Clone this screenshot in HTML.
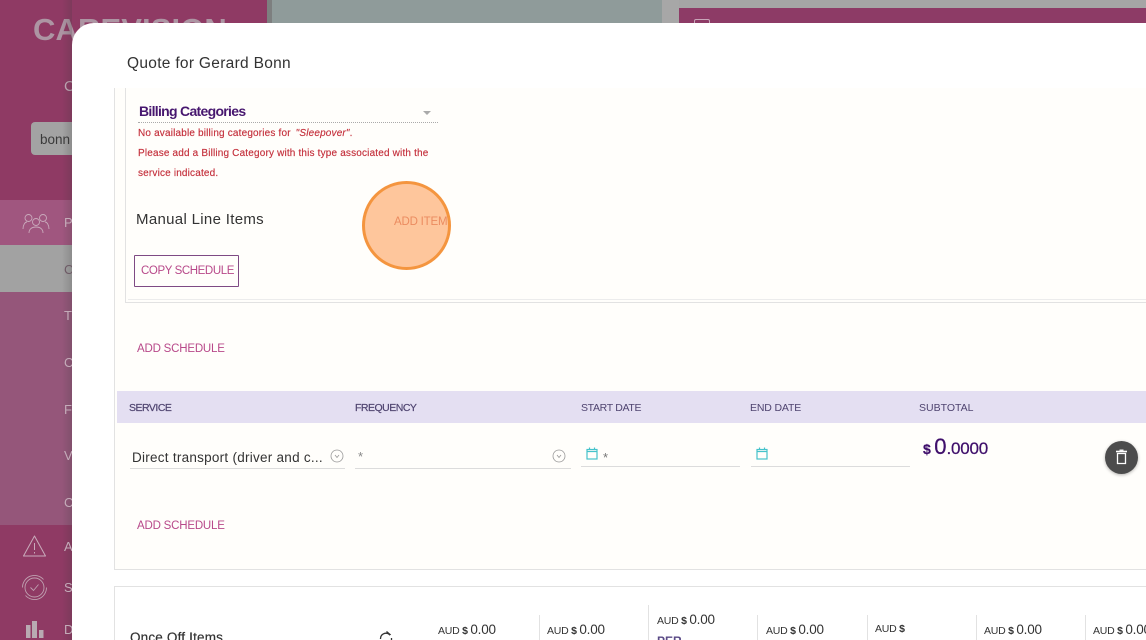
<!DOCTYPE html>
<html><head><meta charset="utf-8">
<style>
html,body{margin:0;padding:0;width:1146px;height:640px;overflow:hidden;background:#a5a5a5}
*{box-sizing:border-box}
body{position:relative;font-family:"Liberation Sans",sans-serif;color:#333}
.a{position:absolute;white-space:nowrap}
.pk{color:#b8498a;font-size:11.5px;letter-spacing:-.2px}
.hd{color:#4f4470;font-size:10.5px;top:402px}
.nav{color:#c4abb9;font-size:13px;left:64px}
.aud{font-size:10.5px;color:#333;letter-spacing:-.25px}
.aud b{font-weight:400;font-size:13.5px;letter-spacing:-.2px}
.sep{position:absolute;top:615px;height:25px;width:1px;background:#e2e2e2}
.er{left:138px;font-size:10px;color:#c4303c;letter-spacing:.17px;-webkit-text-stroke:.15px #c4303c}
</style></head><body>
<!-- backdrop -->
<div class="a" style="left:0;top:0;width:267px;height:640px;background:#8f3a64"></div>
<div class="a" style="left:267px;top:0;width:395px;height:30px;background:#8f9b9a"></div>
<div class="a" style="left:267px;top:0;width:5px;height:30px;background:#7d7f7f"></div>
<div class="a" style="left:662px;top:0;width:17px;height:30px;background:#a7a7a7"></div>
<div class="a" style="left:679px;top:8px;width:467px;height:30px;background:#8d3b66"></div>
<div class="a" style="left:694px;top:19px;width:16px;height:10px;border:1px solid #c8a5b8;border-radius:2px"></div>
<div class="a" style="left:33px;top:12px;font-size:31px;font-weight:700;color:#ad95a3;letter-spacing:.1px">CAREVISION</div>
<div class="a nav" style="top:78px;font-size:15px">C</div>
<div class="a" style="left:31px;top:122px;width:60px;height:33px;background:#a3a3a3;border-radius:4px"></div>
<div class="a" style="left:40px;top:132px;font-size:13.5px;color:#3a3a3a">bonn</div>
<div class="a" style="left:0;top:200px;width:72px;height:45px;background:#a0567f"></div>
<div class="a" style="left:0;top:245px;width:72px;height:47px;background:#a2a2a2"></div>
<div class="a" style="left:0;top:292px;width:72px;height:233px;background:#95567a"></div>
<div class="a" style="left:62px;top:0;width:10px;height:640px;background:linear-gradient(90deg,rgba(60,60,60,0),rgba(60,60,60,.22))"></div>
<svg class="a" style="left:22px;top:213px" width="28" height="22" viewBox="0 0 28 22" fill="none" stroke="#c9a9bb" stroke-width=".9">
<circle cx="6.500" cy="5" r="3.500"/><circle cx="21" cy="5" r="3.500"/><circle cx="14" cy="9" r="3.500"/>
<path d="M1 16c0-4 2-7 4-7M27 16c0-4-2-7-4-7M7 20c0-4 3-6 7-6s7 2 7 6"/></svg>
<svg class="a" style="left:22px;top:534px" width="25" height="24" viewBox="0 0 25 24" fill="none" stroke="#c9abbb" stroke-width="1">
<path d="M12.500 2 1.500 22h22z" stroke-linejoin="round"/><path d="M12.500 9v7M12.500 18v1.500"/></svg>
<svg class="a" style="left:21px;top:574px" width="27" height="27" viewBox="0 0 27 27" fill="none" stroke="#bfa0b0" stroke-width=".9">
<circle cx="13.500" cy="13.500" r="9.500"/><path d="M1.500 13.500a12 12 0 0 1 21-8M25.500 13.500a12 12 0 0 1-21 8M9.500 13.500l3 3 5-6"/></svg>
<svg class="a" style="left:26px;top:621px" width="18" height="17" viewBox="0 0 18 17" fill="#b9aab2"><rect x="0" y="4" width="4.500" height="13"/><rect x="6" y="0" width="5" height="17"/><rect x="13" y="9" width="4.500" height="8"/></svg>
<div class="a nav" style="top:215px">P</div><div class="a nav" style="top:262px;color:#6d5a65">C</div>
<div class="a nav" style="top:308px">T</div><div class="a nav" style="top:355px">C</div>
<div class="a nav" style="top:402px">F</div><div class="a nav" style="top:448px">V</div>
<div class="a nav" style="top:495px">C</div><div class="a nav" style="top:539px">A</div>
<div class="a nav" style="top:580px">S</div><div class="a nav" style="top:622px">D</div>

<!-- modal -->
<div class="a" style="left:72px;top:23px;width:1100px;height:640px;background:#fff;border-radius:22px 0 0 0"></div>
<div class="a" style="left:127px;top:55px;font-size:15.500px;color:#333;letter-spacing:.3px">Quote for Gerard Bonn</div>
<div class="a" style="left:114px;top:88px;width:1032px;height:552px;background:#fffefb"></div>
<div class="a" style="left:114px;top:88px;width:1px;height:482px;background:#e2e2e2"></div>
<div class="a" style="left:114px;top:569px;width:1032px;height:1px;background:#e2e2e2"></div>
<div class="a" style="left:114px;top:570px;width:1032px;height:16px;background:#fff"></div>
<div class="a" style="left:114px;top:586px;width:1032px;height:54px;background:#fff;border-left:1px solid #e2e2e2;border-top:1px solid #e2e2e2"></div>
<div class="a" style="left:125px;top:88px;width:1021px;height:215px;border-left:1px solid #e2e2e2;border-bottom:1px solid #e2e2e2"></div>
<div class="a" style="left:128px;top:88px;width:1018px;height:212px;border-bottom:1px solid #ececec"></div>

<!-- billing -->
<div class="a" style="left:139px;top:103px;font-size:14px;font-weight:700;color:#47176f;letter-spacing:-.7px">Billing Categories</div>
<div class="a" style="left:423px;top:111px;width:0;height:0;border-left:4.500px solid transparent;border-right:4.500px solid transparent;border-top:4px solid #aaa"></div>
<div class="a" style="left:138px;top:122px;width:300px;border-top:1px dotted #aaa"></div>
<div class="a er" style="top:127px;line-height:13px">No available billing categories for <span style="margin-left:2px"><i>"Sleepover"</i></span>.</div>
<div class="a er" style="top:147px;line-height:13px">Please add a Billing Category with this type associated with the</div>
<div class="a er" style="top:167px;line-height:13px">service indicated.</div>
<div class="a" style="left:136px;top:211px;font-size:15px;color:#333;letter-spacing:.32px">Manual Line Items</div>
<div class="a pk" style="left:394px;top:216px;width:56px;overflow:hidden;color:#c8564f">ADD ITEM</div>
<div class="a" style="left:362px;top:181px;width:89px;height:89px;border-radius:50%;background:rgba(253,168,105,.65);border:3.500px solid #f4953f"></div>
<div class="a" style="left:134px;top:255px;width:105px;height:32px;border:1px solid #7e4a84;border-radius:1px"></div>
<div class="a pk" style="left:141px;top:265px;letter-spacing:-.4px">COPY SCHEDULE</div>
<div class="a pk" style="left:137px;top:343px">ADD SCHEDULE</div>

<!-- table -->
<div class="a" style="left:117px;top:391px;width:1029px;height:32px;background:#e4dff2"></div>
<div class="a hd" style="left:129px;letter-spacing:-.5px;-webkit-text-stroke:.2px #4f4470">SERVICE</div>
<div class="a hd" style="left:355px;letter-spacing:-.5px;-webkit-text-stroke:.2px #4f4470">FREQUENCY</div>
<div class="a hd" style="left:581px;letter-spacing:-.32px">START DATE</div>
<div class="a hd" style="left:750px;letter-spacing:-.15px">END DATE</div>
<div class="a hd" style="left:919px">SUBTOTAL</div>

<div class="a" style="left:132px;top:450px;font-size:13.500px;color:#333;letter-spacing:.26px">Direct transport (driver and c...</div>
<svg class="a" style="left:330px;top:449px" width="14" height="14" viewBox="0 0 14 14" fill="none" stroke="#999" stroke-width=".8"><circle cx="7" cy="7" r="6"/><path d="M5 6l2 2.500L9 6"/></svg>
<div class="a" style="left:130px;top:468px;width:215px;height:1px;background:#dcdcdc"></div>
<div class="a" style="left:358px;top:449px;font-size:13px;color:#888">*</div>
<svg class="a" style="left:552px;top:449px" width="14" height="14" viewBox="0 0 14 14" fill="none" stroke="#999" stroke-width=".8"><circle cx="7" cy="7" r="6"/><path d="M5 6l2 2.500L9 6"/></svg>
<div class="a" style="left:355px;top:468px;width:216px;height:1px;background:#dcdcdc"></div>
<svg class="a" style="left:586px;top:447px" width="12" height="13" viewBox="0 0 12 13" fill="none" stroke="#45c3cb" stroke-width="1.200"><rect x="1" y="2.500" width="10" height="9.500"/><path d="M1 4.500h10M3.500 .5v2M8.500 .5v2" /></svg>
<div class="a" style="left:603px;top:450px;font-size:13px;color:#777">*</div>
<div class="a" style="left:581px;top:466px;width:159px;height:1px;background:#dcdcdc"></div>
<svg class="a" style="left:756px;top:447px" width="12" height="13" viewBox="0 0 12 13" fill="none" stroke="#45c3cb" stroke-width="1.200"><rect x="1" y="2.500" width="10" height="9.500"/><path d="M1 4.500h10M3.500 .5v2M8.500 .5v2"/></svg>
<div class="a" style="left:751px;top:466px;width:159px;height:1px;background:#dcdcdc"></div>
<div class="a" style="left:923px;top:435px;color:#3f0f6b;line-height:24px;-webkit-text-stroke:.25px #3f0f6b"><span style="font-weight:700;font-size:14px;margin-right:-1px">$</span> <span style="font-size:22px">0</span><span style="font-size:17px;letter-spacing:-.2px">.0000</span></div>
<div class="a" style="left:1105px;top:441px;width:33px;height:33px;border-radius:50%;background:#4c4c4c;box-shadow:0 1px 3px rgba(0,0,0,.3)"></div>
<svg class="a" style="left:1114px;top:449px" width="15" height="16" viewBox="0 0 15 16" fill="none" stroke="#fff" stroke-width="1.300"><path d="M2 2.500h11" stroke-width="1.600"/><path d="M5.500 1.200h4"/><path d="M3.500 4.500h8V14.500h-8z"/></svg>
<div class="a pk" style="left:137px;top:520px">ADD SCHEDULE</div>

<!-- once off -->
<div class="a" style="left:130px;top:630px;font-size:13.500px;color:#333;letter-spacing:.18px;-webkit-text-stroke:.2px #333">Once Off Items</div>
<svg class="a" style="left:378px;top:630px" width="16" height="12" viewBox="0 0 16 12" fill="none" stroke="#333" stroke-width="1.300"><path d="M2.500 9a5.500 5.500 0 0 1 9-4.500M13.500 8v2"/><path d="M8.500 1.500l3.500 3-1 .5" /></svg>
<div class="sep" style="left:539px"></div><div class="sep" style="left:648px;top:605px;height:35px"></div><div class="sep" style="left:757px"></div><div class="sep" style="left:867px"></div><div class="sep" style="left:976px"></div><div class="sep" style="left:1085px"></div>
<div class="a aud" style="left:438px;top:622px">AUD <span style="font-weight:700">$</span> <b>0.00</b></div>
<div class="a aud" style="left:547px;top:622px">AUD <span style="font-weight:700">$</span> <b>0.00</b></div>
<div class="a aud" style="left:657px;top:612px">AUD <span style="font-weight:700">$</span> <b>0.00</b></div>
<div class="a" style="left:657px;top:634px;font-size:12px;font-weight:700;color:#5a4a86">PER</div>
<div class="a aud" style="left:766px;top:622px">AUD <span style="font-weight:700">$</span> <b>0.00</b></div>
<div class="a aud" style="left:875px;top:623px">AUD <span style="font-weight:700">$</span></div>
<div class="a aud" style="left:984px;top:622px">AUD <span style="font-weight:700">$</span> <b>0.00</b></div>
<div class="a aud" style="left:1093px;top:622px">AUD <span style="font-weight:700">$</span> <b>0.00</b></div>
</body></html>
